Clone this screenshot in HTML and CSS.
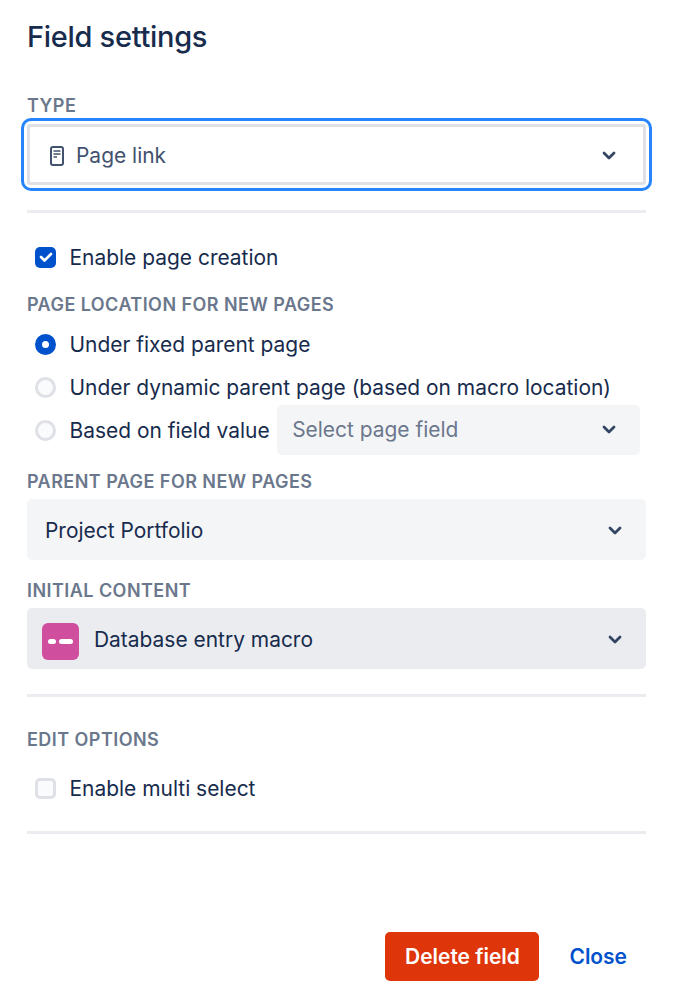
FILE: index.html
```html
<!DOCTYPE html>
<html lang="en">
<head>
<meta charset="utf-8">
<title>Field settings</title>
<link rel="stylesheet" href="styles.css">
</head>
<body>
<main class="panel">
  <h1 class="title">Field settings</h1>
  <div class="label label-type">TYPE</div>
  <div class="focus-ring">
    <div class="select-outline">
      <svg class="page-icon" viewBox="0 0 14 20" width="14" height="20" aria-hidden="true">
        <rect x="1" y="1" width="12" height="18" rx="2" fill="none" stroke="#42526E" stroke-width="2"/>
        <path d="M3.5 5h7M3.5 8h7M3.5 11h3.5" stroke="#42526E" stroke-width="1.5" fill="none"/>
      </svg>
      <span class="type-text">Page link</span>
      <svg class="chev" viewBox="0 0 14 10" width="14" height="10" aria-hidden="true"><path d="M2 2l5 5 5-5" fill="none" stroke="#344563" stroke-width="2.8" stroke-linecap="round" stroke-linejoin="round"/></svg>
    </div>
  </div>
  <hr class="rule rule-1">
  <div class="option option-check">
    <span class="box box-on"><svg viewBox="0 0 14 12" width="14" height="12" aria-hidden="true"><path d="M2 6l3.5 3.5L12 3" fill="none" stroke="#fff" stroke-width="2.6" stroke-linecap="round" stroke-linejoin="round"/></svg></span>
    <span>Enable page creation</span>
  </div>
  <div class="label label-loc">PAGE LOCATION FOR NEW PAGES</div>
  <div class="radios">
    <div class="option"><span class="radio radio-on"></span><span>Under fixed parent page</span></div>
    <div class="option"><span class="radio"></span><span>Under dynamic parent page (based on macro location)</span></div>
    <div class="option">
      <span class="radio"></span><span>Based on field value</span>
      <div class="select select-field">
        <span class="placeholder">Select page field</span>
        <svg class="chev" viewBox="0 0 14 10" width="14" height="10" aria-hidden="true"><path d="M2 2l5 5 5-5" fill="none" stroke="#344563" stroke-width="2.8" stroke-linecap="round" stroke-linejoin="round"/></svg>
      </div>
    </div>
  </div>
  <div class="label label-parent">PARENT PAGE FOR NEW PAGES</div>
  <div class="select select-wide">
    <span>Project Portfolio</span>
    <svg class="chev" viewBox="0 0 14 10" width="14" height="10" aria-hidden="true"><path d="M2 2l5 5 5-5" fill="none" stroke="#344563" stroke-width="2.8" stroke-linecap="round" stroke-linejoin="round"/></svg>
  </div>
  <div class="label label-init">INITIAL CONTENT</div>
  <div class="select select-wide select-macro">
    <span class="macro-icon"><i class="dash dash-short"></i><i class="dash dash-long"></i></span>
    <span class="macro-text">Database entry macro</span>
    <svg class="chev" viewBox="0 0 14 10" width="14" height="10" aria-hidden="true"><path d="M2 2l5 5 5-5" fill="none" stroke="#344563" stroke-width="2.8" stroke-linecap="round" stroke-linejoin="round"/></svg>
  </div>
  <hr class="rule rule-2">
  <div class="label label-edit">EDIT OPTIONS</div>
  <div class="option option-multi"><span class="box"></span><span>Enable multi select</span></div>
  <hr class="rule rule-3">
  <div class="actions">
    <button class="btn btn-danger" type="button">Delete field</button>
    <button class="btn btn-link" type="button">Close</button>
  </div>
</main>
</body>
</html>
```

FILE: styles.css
```css
* { box-sizing: border-box; }
html, body { margin: 0; padding: 0; background: #fff; }
body { font-family: Inter, "Liberation Sans", sans-serif; color: #172B4D; font-size: 20.95px; }
.panel { width: 679px; height: 999px; padding: 0 33px 0 27px; display: flex; flex-direction: column; }
.title { margin: 19px 0 0; font-size: 29px; line-height: 36px; font-weight: 500; letter-spacing: -0.3px; color: #172B4D; }
.label { font-size: 18px; line-height: 20px; padding-top: 1px; font-weight: 600; color: #6B778C; letter-spacing: 0.45px; }
.label-type { margin-top: 40px; }
.focus-ring { margin: 2px -6px 0 -6px; height: 73px; border: 3px solid #2684FF; border-radius: 10px; padding: 3px; background: #fff; }
.select-outline { height: 61px; border: 3px solid #DFE1E6; border-radius: 3px; display: flex; align-items: center; padding: 2px 27px 0 20px; color: #42526E; }
.page-icon { flex: none; }
.type-text { margin-left: 12px; flex: 1; }
.chev { flex: none; display: block; }
.rule { border: 0; margin: 0; height: 3px; background: #EBECF0; flex: none; }
.rule-1 { margin-top: 19px; }
.option { display: flex; align-items: center; height: 43px; padding-left: 8px; white-space: nowrap; }
.option-check { margin-top: 24px; height: 40px; }
.box { flex: none; width: 21px; height: 21px; border-radius: 5px; margin-right: 13.5px; border: 3px solid #DFE1E6; background: #FAFBFC; display: flex; align-items: center; justify-content: center; }
.box-on { background: #0052CC; border: 0; }
.radio { flex: none; width: 21px; height: 21px; border-radius: 50%; margin-right: 13.5px; border: 3px solid #DFE1E6; background: #FAFBFC; }
.radio-on { border: 7px solid #0052CC; background: #fff; }
.label-loc { margin-top: 17px; }
.radios { margin-top: 8px; display: flex; flex-direction: column; }
.select { display: flex; align-items: center; justify-content: space-between; background: #F4F5F7; border-radius: 5px; }
.select-field { margin: 0 0 2px 7.5px; width: 363px; height: 50px; flex: none; padding: 0 24px 0 15px; }
.placeholder { color: #6B778C; }
.label-parent { margin-top: 19px; }
.select-wide { margin-top: 7px; height: 61px; padding: 2px 24px 0 18px; }
.label-init { margin-top: 20px; }
.select-macro { background: #EBECF0; padding-left: 15px; }
.macro-icon { flex: none; width: 37px; height: 37px; margin-top: 3px; border-radius: 6px; background: #CF4F9E; display: flex; align-items: center; justify-content: center; gap: 3px; }
.dash { display: block; height: 5px; background: #fff; border-radius: 3px; }
.dash-short { width: 8px; }
.dash-long { width: 14px; }
.macro-text { flex: 1; margin-left: 15px; }
.rule-2 { margin-top: 25px; }
.label-edit { margin-top: 32px; }
.option-multi { margin-top: 26px; height: 24px; }
.rule-3 { margin-top: 31px; }
.actions { margin-top: 98px; display: flex; align-items: center; justify-content: flex-end; padding-right: 19px; gap: 30px; }
.btn { font: inherit; font-weight: 600; border: 0; cursor: pointer; height: 49px; border-radius: 5px; }
.btn-danger { width: 154px; background: #DE350B; color: #fff; }
.btn-link { background: none; color: #0052CC; padding: 0; }
```
